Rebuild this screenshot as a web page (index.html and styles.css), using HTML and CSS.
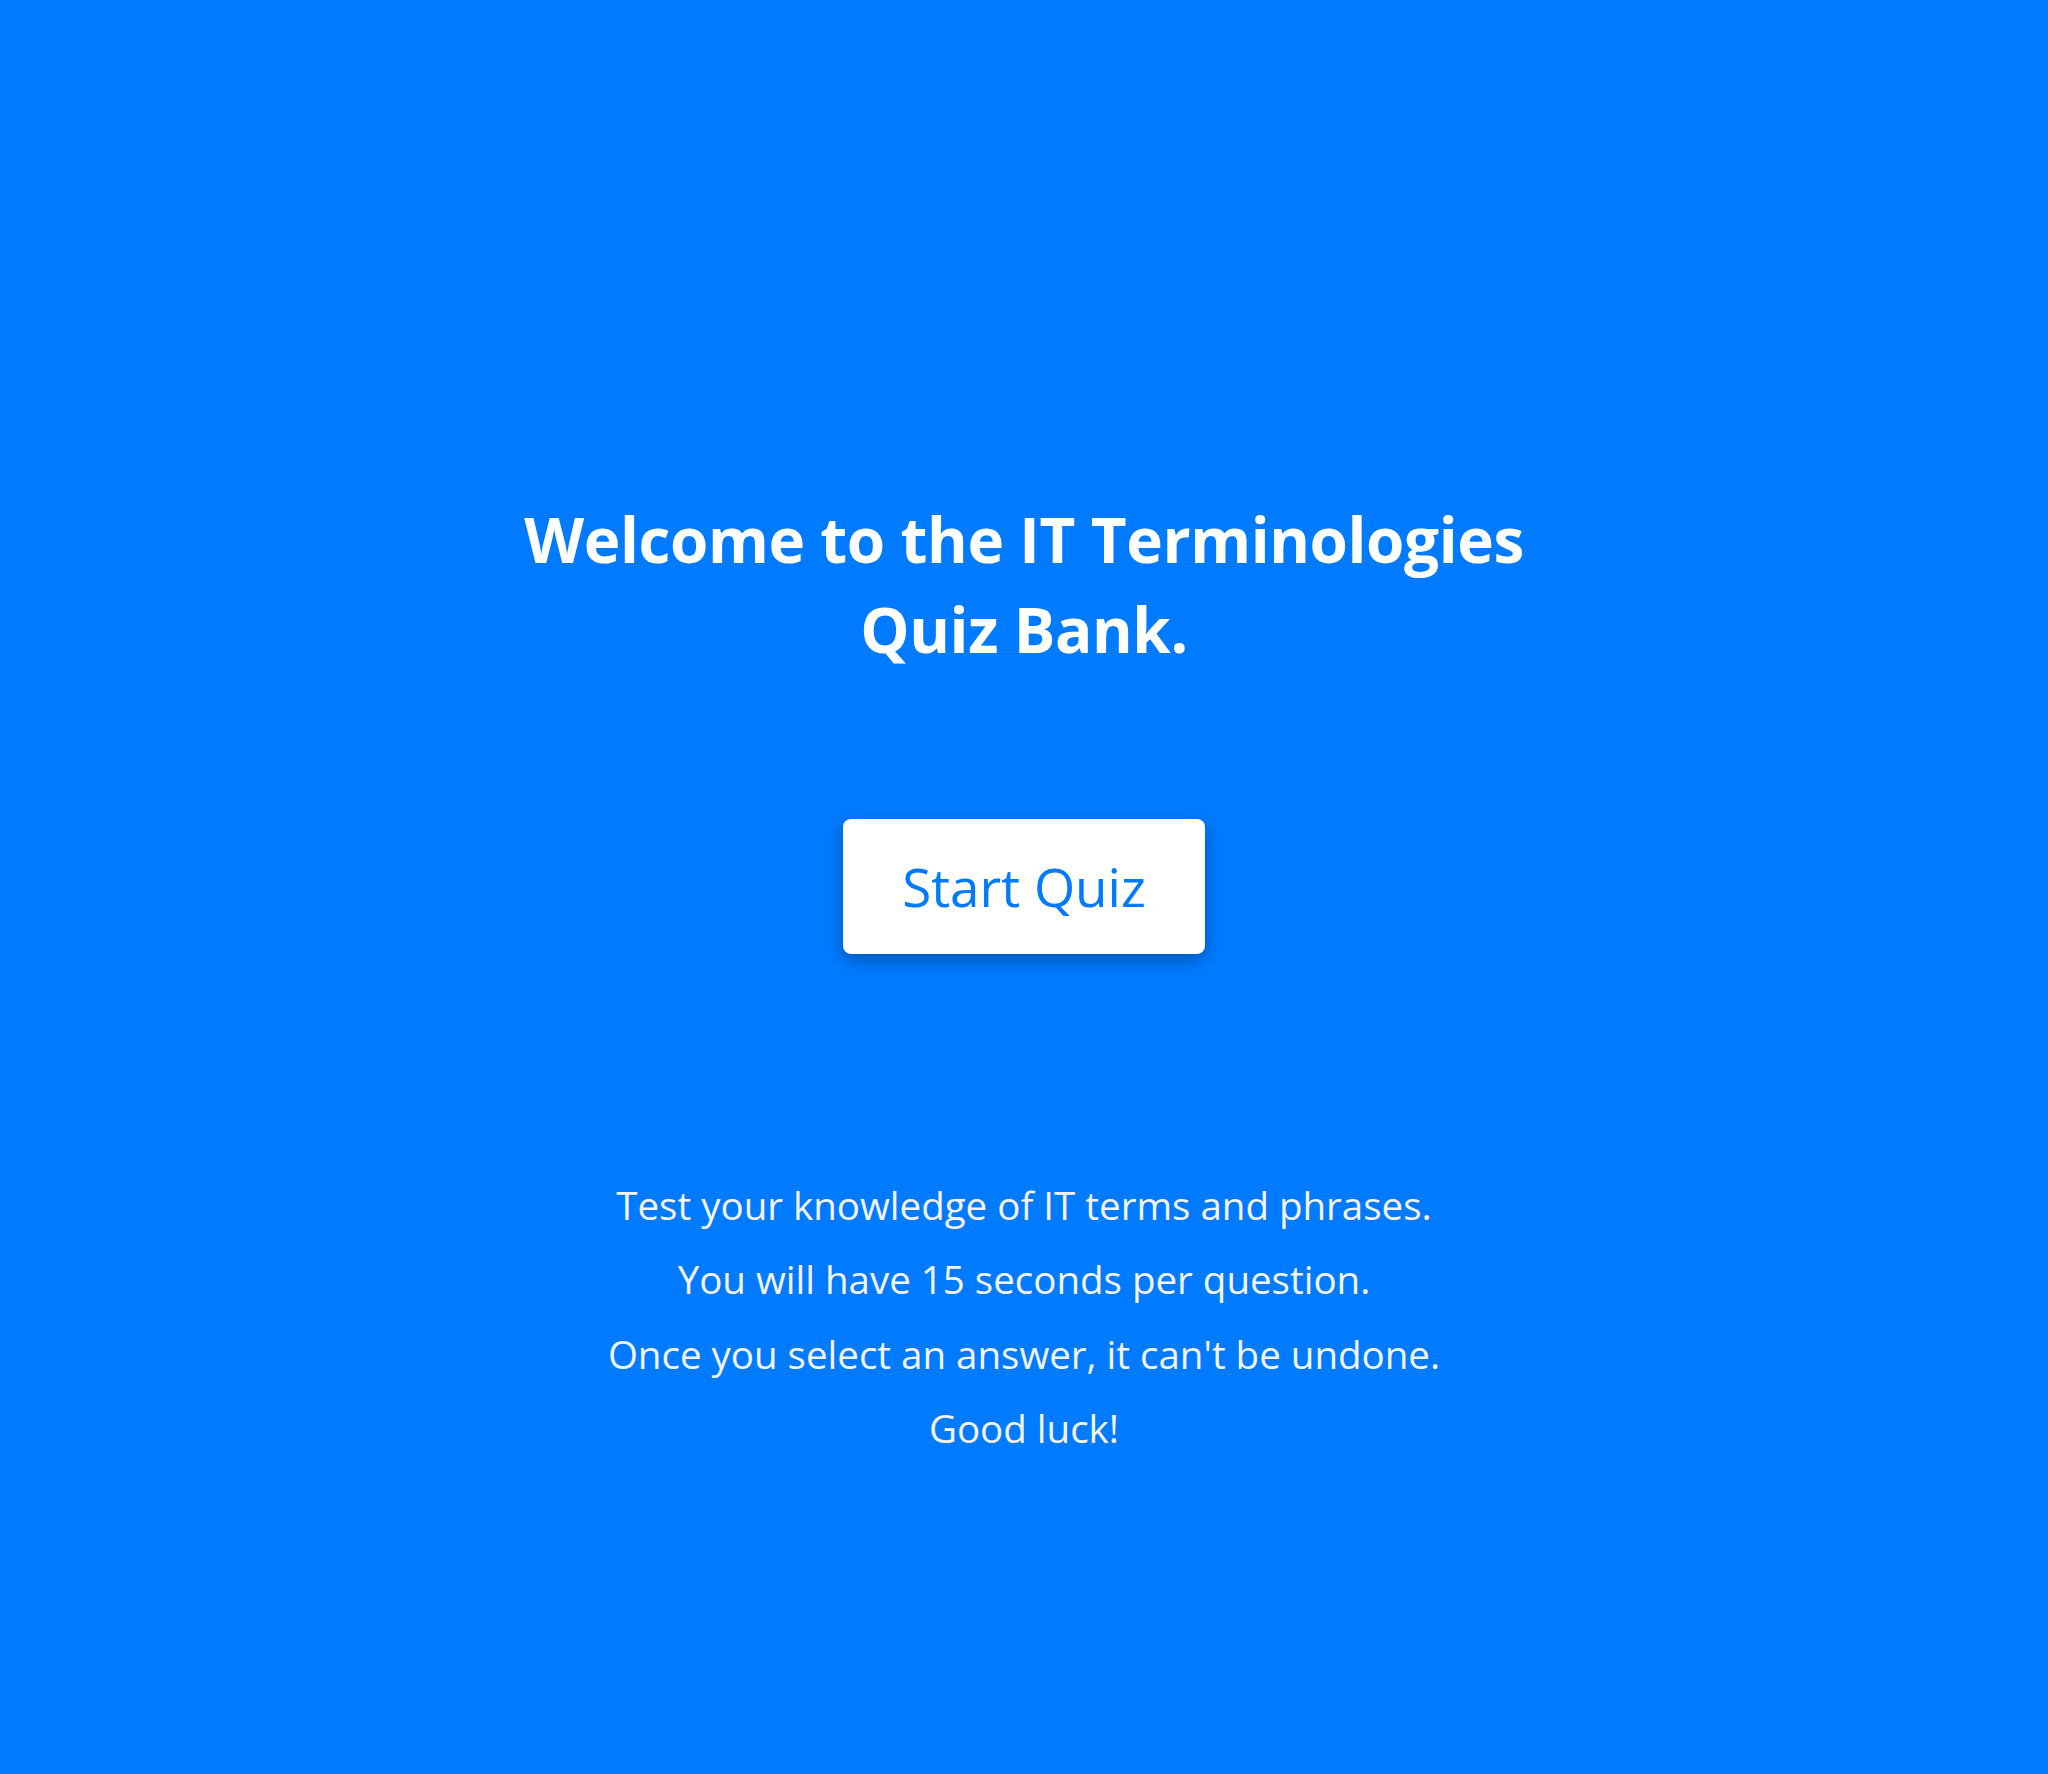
FILE: index.html
```html
<!DOCTYPE html>
<html lang="en">
<head>
<meta charset="utf-8">
<title>IT Terminologies Quiz Bank</title>
<link rel="stylesheet" href="styles.css">
</head>
<body>
<main class="start">
  <h1 class="title">Welcome to the IT Terminologies<br>Quiz Bank.</h1>
  <button class="start-btn" type="button">Start Quiz</button>
  <div class="rules">
    <p>Test your knowledge of IT terms and phrases.</p>
    <p>You will have 15 seconds per question.</p>
    <p>Once you select an answer, it can't be undone.</p>
    <p>Good luck!</p>
  </div>
</main>
</body>
</html>
```
FILE: styles.css
```css
html, body {
  margin: 0;
  padding: 0;
}
body {
  background: #007bff;
  min-height: 100vh;
  font-family: "Open Sans", "Noto Sans", sans-serif;
  color: #fff;
}
.start {
  display: flex;
  flex-direction: column;
  align-items: center;
  padding-top: 494px;
}
.title {
  margin: 0;
  font-size: 62px;
  line-height: 90px;
  font-weight: 700;
  text-align: center;
  letter-spacing: -0.4px;
}
.start-btn {
  margin-top: 145px;
  width: 362px;
  height: 135px;
  border: none;
  border-radius: 8px;
  background: #fff;
  color: #007bff;
  font-family: "Open Sans", "Noto Sans", sans-serif;
  font-size: 53px;
  font-weight: 400;
  box-shadow: 0 6px 18px rgba(0, 0, 0, 0.3);
  cursor: pointer;
}
.rules {
  margin-top: 214px;
  text-align: center;
}
.rules p {
  margin: 0;
  font-size: 38.5px;
  line-height: 74.3px;
  color: #f4f4f8;
}
```
